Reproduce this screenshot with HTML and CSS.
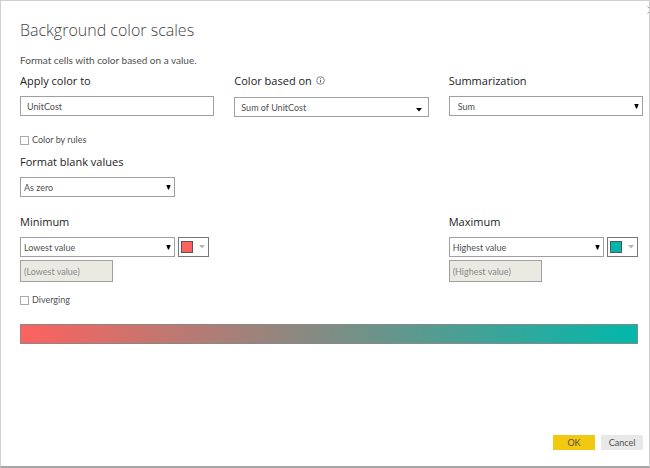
FILE: index.html
```html
<!DOCTYPE html>
<html lang="en">
<head>
<meta charset="utf-8">
<meta name="viewport" content="width=device-width, initial-scale=1">
<title>Background color scales</title>
<link rel="stylesheet" href="styles.css">
</head>
<body>
<form class="dialog">
  <button class="close" type="button" aria-label="Close">
    <svg viewBox="0 0 8 8" width="8" height="8"><path d="M.5.5l7 7M7.5.5l-7 7" fill="none" stroke="#999"/></svg>
  </button>
  <h1 class="title">Background color scales</h1>
  <p class="intro">Format cells with color based on a value.</p>

  <div class="columns">
    <div class="field">
      <label class="label" for="apply">Apply color to</label>
      <input class="box box-wide" id="apply" type="text" value="UnitCost">
    </div>
    <div class="field">
      <div class="label-row">
        <label class="label" for="based">Color based on</label>
        <svg class="info" viewBox="0 0 9 9" width="9" height="9"><circle cx="4.5" cy="4.5" r="3.8" fill="none" stroke="#666" stroke-width=".8"/><path d="M4.5 4v2.6M4.5 2.3v.9" stroke="#555" stroke-width=".9"/></svg>
      </div>
      <div class="picker picker-field">
        <select class="box box-wide" id="based"><option>Sum of UnitCost</option></select>
        <svg class="arrow" viewBox="0 0 6 4" width="6" height="4"><path d="M0 0h6L3 3.5z"/></svg>
      </div>
    </div>
    <div class="field">
      <label class="label" for="summary">Summarization</label>
      <div class="picker">
        <select class="box box-indent" id="summary"><option>Sum</option></select>
        <svg class="arrow" viewBox="0 0 5 5" width="5" height="5"><path d="M.3 0h4.4L3 4.4H2z"/></svg>
      </div>
    </div>
  </div>

  <label class="check"><input type="checkbox">Color by rules</label>

  <div class="columns">
    <div class="field">
      <label class="label" for="blank">Format blank values</label>
      <div class="control-row">
        <div class="picker">
          <select class="box" id="blank"><option>As zero</option></select>
          <svg class="arrow" viewBox="0 0 5 5" width="5" height="5"><path d="M.3 0h4.4L3 4.4H2z"/></svg>
        </div>
        <span class="swatch-space"></span>
      </div>
    </div>
  </div>

  <div class="columns range">
    <div class="field">
      <label class="label" for="min">Minimum</label>
      <div class="control-row">
        <div class="picker">
          <select class="box" id="min"><option>Lowest value</option></select>
          <svg class="arrow" viewBox="0 0 5 5" width="5" height="5"><path d="M.3 0h4.4L3 4.4H2z"/></svg>
        </div>
        <button class="swatch" type="button" aria-label="Minimum color">
          <span class="chip chip-min"></span>
          <svg viewBox="0 0 6 4" width="6" height="4"><path d="M0 0h6L3 3.5z" fill="#b5b5b5"/></svg>
        </button>
      </div>
      <input class="box box-disabled" type="text" value="(Lowest value)" aria-label="Minimum value" disabled>
    </div>
    <div class="field field-last">
      <label class="label" for="max">Maximum</label>
      <div class="control-row">
        <div class="picker">
          <select class="box" id="max"><option>Highest value</option></select>
          <svg class="arrow" viewBox="0 0 5 5" width="5" height="5"><path d="M.3 0h4.4L3 4.4H2z"/></svg>
        </div>
        <button class="swatch" type="button" aria-label="Maximum color">
          <span class="chip chip-max"></span>
          <svg viewBox="0 0 6 4" width="6" height="4"><path d="M0 0h6L3 3.5z" fill="#b5b5b5"/></svg>
        </button>
      </div>
      <input class="box box-disabled" type="text" value="(Highest value)" aria-label="Maximum value" disabled>
    </div>
  </div>

  <label class="check"><input type="checkbox">Diverging</label>

  <div class="scale"></div>

  <div class="actions">
    <button class="action action-primary" type="submit">OK</button>
    <button class="action" type="button">Cancel</button>
  </div>
</form>
</body>
</html>
```
FILE: styles.css
```css
* { box-sizing: border-box; }

body {
  margin: 0;
  font-family: Lato, "Open Sans", sans-serif;
  font-size: 9px;
  color: #505050;
  background: #fff;
}

input, select, button { font: inherit; color: inherit; margin: 0; }

.dialog {
  position: relative;
  display: flex;
  flex-direction: column;
  min-height: 100vh;
  padding: 17px 6px 16px 19px;
  border: 1px solid #d0d0d0;
  border-bottom: 2px solid #a6a6a6;
  overflow: hidden;
}

.close {
  position: absolute;
  top: 5px;
  right: -6px;
  padding: 0;
  border: 0;
  background: none;
  line-height: 0;
}

.title {
  margin: 0;
  font-family: "Open Sans", sans-serif;
  font-size: 16px;
  line-height: 24px;
  font-weight: 300;
  color: #444;
}

.intro {
  margin: 11px 0 5px;
  font-size: 10px;
  line-height: 14px;
}

.columns {
  display: grid;
  grid-template-columns: repeat(3, 1fr);
  column-gap: 20px;
}

.field { display: flex; flex-direction: column; min-width: 0; }
.field-last { grid-column: 3; }

.label {
  margin-bottom: 6px;
  font-family: "Open Sans", sans-serif;
  font-size: 11px;
  line-height: 18px;
  color: #222;
}

.label-row { display: flex; gap: 4px; }
.info { margin-top: 4px; }

.picker { position: relative; flex: 1; min-width: 0; }
.picker-field { margin-top: 1px; }

.box {
  display: block;
  width: 100%;
  height: 20px;
  padding: 0 3px;
  border: 1px solid #a0a0a0;
  border-radius: 0;
  appearance: none;
  background: #fff;
}

.box-wide { padding: 0 6px; }
.box-indent { padding: 0 8px; }

.box-disabled {
  width: 48%;
  height: 22px;
  margin-top: 3px;
  background: #eaeae3;
  color: #888;
}

.arrow {
  position: absolute;
  right: 4px;
  top: 8px;
  fill: #000;
  pointer-events: none;
}

.picker-field .arrow { right: 7px; top: 11px; }

.control-row { display: flex; gap: 3px; margin-right: 5px; }
.swatch-space { width: 31px; }

.swatch {
  display: flex;
  align-items: center;
  justify-content: space-between;
  width: 31px;
  height: 20px;
  padding: 0 3px 1px 2px;
  border: 1px solid #777;
  background: #fff;
}

.chip { width: 12px; height: 12px; border: 1px solid #555; }
.chip-min { background: #fd625e; }
.chip-max { background: #01b8aa; }

.check {
  display: flex;
  align-items: center;
  align-self: flex-start;
  gap: 3px;
  margin: 17px 0 7px;
  line-height: 12px;
}

.check input {
  appearance: none;
  width: 9px;
  height: 9px;
  border: 1px solid #aaa;
}

.range { margin-top: 16px; }
.range + .check { margin: 12px 0 18px; }

.scale {
  height: 20px;
  margin-right: 5px;
  border: 1px solid #888;
  background: linear-gradient(to right, #fd625e, #01b8aa);
}

.actions {
  display: flex;
  justify-content: flex-end;
  gap: 6px;
  margin-top: auto;
}

.action {
  width: 42px;
  height: 15px;
  padding: 0;
  border: 0;
  background: #e8e8e8;
}

.action-primary { background: #f2c811; }
```
